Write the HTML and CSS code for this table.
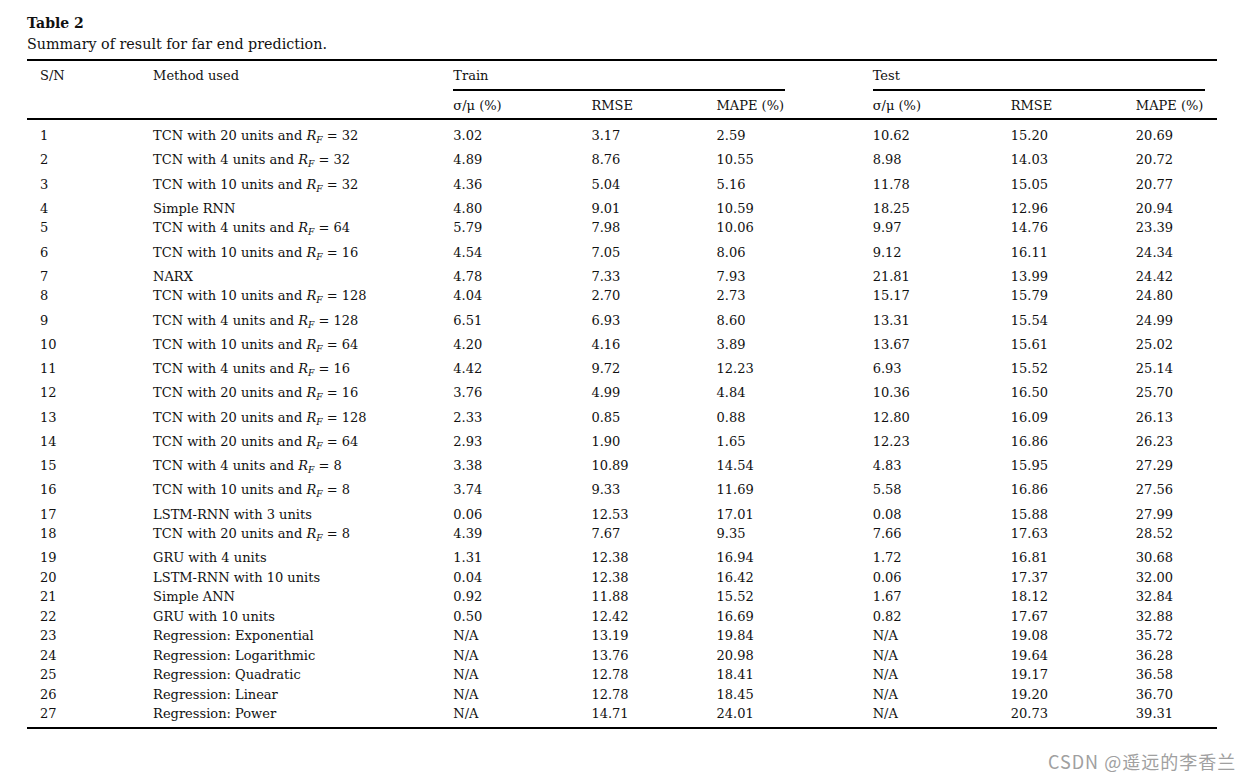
FILE: index.html
```html
<!DOCTYPE html>
<html>
<head>
<meta charset="utf-8">
<link rel="stylesheet" href="styles.css">
</head>
<body>
<div class="page">
  <div class="title">Table 2</div>
  <div class="caption">Summary of result for far end prediction.</div>
  <table class="results">
    <colgroup>
      <col class="c-sn"><col class="c-method"><col class="c-a"><col class="c-b"><col class="c-c"><col class="c-a"><col class="c-b"><col class="c-d">
    </colgroup>
    <thead>
      <tr class="h1">
        <th rowspan="2" class="first top">S/N</th>
        <th rowspan="2" class="top">Method used</th>
        <th colspan="3" class="group"><div class="group-label">Train</div></th>
        <th colspan="3" class="group"><div class="group-label">Test</div></th>
      </tr>
      <tr class="h2">
        <th>σ/μ (%)</th><th>RMSE</th><th>MAPE (%)</th>
        <th>σ/μ (%)</th><th>RMSE</th><th>MAPE (%)</th>
      </tr>
    </thead>
    <tbody>
      <tr class="tall first-row"><td class="first">1</td><td>TCN with 20 units and <i>R</i><sub><i>F</i></sub> = 32</td><td>3.02</td><td>3.17</td><td>2.59</td><td>10.62</td><td>15.20</td><td>20.69</td></tr>
      <tr class="tall"><td class="first">2</td><td>TCN with 4 units and <i>R</i><sub><i>F</i></sub> = 32</td><td>4.89</td><td>8.76</td><td>10.55</td><td>8.98</td><td>14.03</td><td>20.72</td></tr>
      <tr class="tall"><td class="first">3</td><td>TCN with 10 units and <i>R</i><sub><i>F</i></sub> = 32</td><td>4.36</td><td>5.04</td><td>5.16</td><td>11.78</td><td>15.05</td><td>20.77</td></tr>
      <tr><td class="first">4</td><td>Simple RNN</td><td>4.80</td><td>9.01</td><td>10.59</td><td>18.25</td><td>12.96</td><td>20.94</td></tr>
      <tr class="tall"><td class="first">5</td><td>TCN with 4 units and <i>R</i><sub><i>F</i></sub> = 64</td><td>5.79</td><td>7.98</td><td>10.06</td><td>9.97</td><td>14.76</td><td>23.39</td></tr>
      <tr class="tall"><td class="first">6</td><td>TCN with 10 units and <i>R</i><sub><i>F</i></sub> = 16</td><td>4.54</td><td>7.05</td><td>8.06</td><td>9.12</td><td>16.11</td><td>24.34</td></tr>
      <tr><td class="first">7</td><td>NARX</td><td>4.78</td><td>7.33</td><td>7.93</td><td>21.81</td><td>13.99</td><td>24.42</td></tr>
      <tr class="tall"><td class="first">8</td><td>TCN with 10 units and <i>R</i><sub><i>F</i></sub> = 128</td><td>4.04</td><td>2.70</td><td>2.73</td><td>15.17</td><td>15.79</td><td>24.80</td></tr>
      <tr class="tall"><td class="first">9</td><td>TCN with 4 units and <i>R</i><sub><i>F</i></sub> = 128</td><td>6.51</td><td>6.93</td><td>8.60</td><td>13.31</td><td>15.54</td><td>24.99</td></tr>
      <tr class="tall"><td class="first">10</td><td>TCN with 10 units and <i>R</i><sub><i>F</i></sub> = 64</td><td>4.20</td><td>4.16</td><td>3.89</td><td>13.67</td><td>15.61</td><td>25.02</td></tr>
      <tr class="tall"><td class="first">11</td><td>TCN with 4 units and <i>R</i><sub><i>F</i></sub> = 16</td><td>4.42</td><td>9.72</td><td>12.23</td><td>6.93</td><td>15.52</td><td>25.14</td></tr>
      <tr class="tall"><td class="first">12</td><td>TCN with 20 units and <i>R</i><sub><i>F</i></sub> = 16</td><td>3.76</td><td>4.99</td><td>4.84</td><td>10.36</td><td>16.50</td><td>25.70</td></tr>
      <tr class="tall"><td class="first">13</td><td>TCN with 20 units and <i>R</i><sub><i>F</i></sub> = 128</td><td>2.33</td><td>0.85</td><td>0.88</td><td>12.80</td><td>16.09</td><td>26.13</td></tr>
      <tr class="tall"><td class="first">14</td><td>TCN with 20 units and <i>R</i><sub><i>F</i></sub> = 64</td><td>2.93</td><td>1.90</td><td>1.65</td><td>12.23</td><td>16.86</td><td>26.23</td></tr>
      <tr class="tall"><td class="first">15</td><td>TCN with 4 units and <i>R</i><sub><i>F</i></sub> = 8</td><td>3.38</td><td>10.89</td><td>14.54</td><td>4.83</td><td>15.95</td><td>27.29</td></tr>
      <tr class="tall"><td class="first">16</td><td>TCN with 10 units and <i>R</i><sub><i>F</i></sub> = 8</td><td>3.74</td><td>9.33</td><td>11.69</td><td>5.58</td><td>16.86</td><td>27.56</td></tr>
      <tr><td class="first">17</td><td>LSTM-RNN with 3 units</td><td>0.06</td><td>12.53</td><td>17.01</td><td>0.08</td><td>15.88</td><td>27.99</td></tr>
      <tr class="tall"><td class="first">18</td><td>TCN with 20 units and <i>R</i><sub><i>F</i></sub> = 8</td><td>4.39</td><td>7.67</td><td>9.35</td><td>7.66</td><td>17.63</td><td>28.52</td></tr>
      <tr><td class="first">19</td><td>GRU with 4 units</td><td>1.31</td><td>12.38</td><td>16.94</td><td>1.72</td><td>16.81</td><td>30.68</td></tr>
      <tr><td class="first">20</td><td>LSTM-RNN with 10 units</td><td>0.04</td><td>12.38</td><td>16.42</td><td>0.06</td><td>17.37</td><td>32.00</td></tr>
      <tr><td class="first">21</td><td>Simple ANN</td><td>0.92</td><td>11.88</td><td>15.52</td><td>1.67</td><td>18.12</td><td>32.84</td></tr>
      <tr><td class="first">22</td><td>GRU with 10 units</td><td>0.50</td><td>12.42</td><td>16.69</td><td>0.82</td><td>17.67</td><td>32.88</td></tr>
      <tr><td class="first">23</td><td>Regression: Exponential</td><td>N/A</td><td>13.19</td><td>19.84</td><td>N/A</td><td>19.08</td><td>35.72</td></tr>
      <tr><td class="first">24</td><td>Regression: Logarithmic</td><td>N/A</td><td>13.76</td><td>20.98</td><td>N/A</td><td>19.64</td><td>36.28</td></tr>
      <tr><td class="first">25</td><td>Regression: Quadratic</td><td>N/A</td><td>12.78</td><td>18.41</td><td>N/A</td><td>19.17</td><td>36.58</td></tr>
      <tr><td class="first">26</td><td>Regression: Linear</td><td>N/A</td><td>12.78</td><td>18.45</td><td>N/A</td><td>19.20</td><td>36.70</td></tr>
      <tr class="last-row"><td class="first">27</td><td>Regression: Power</td><td>N/A</td><td>14.71</td><td>24.01</td><td>N/A</td><td>20.73</td><td>39.31</td></tr>
    </tbody>
  </table>
  <div class="watermark">CSDN @遥远的李香兰</div>
</div>
</body>
</html>
```
FILE: styles.css
```css
html, body {
  margin: 0;
  padding: 0;
  background: #ffffff;
}
.page {
  position: relative;
  width: 1254px;
  height: 780px;
  padding: 12px 0 0 27px;
  box-sizing: border-box;
  font-family: "DejaVu Serif", "Liberation Serif", serif;
  font-size: 13px;
  color: #111111;
}
.title {
  font-weight: bold;
  font-size: 14px;
  line-height: 20px;
  height: 20px;
  padding-top: 1px;
}
.caption {
  font-size: 14.3px;
  line-height: 20px;
  height: 20px;
  margin-top: 1px;
}
.results {
  margin-top: 5px;
  width: 1190px;
  table-layout: fixed;
  border-collapse: collapse;
  border-top: 2px solid #000;
  border-bottom: 2px solid #000;
}
.c-sn { width: 126px; }
.c-method { width: 300px; }
.c-a { width: 138px; }
.c-b { width: 125px; }
.c-c { width: 156px; }
.c-d { width: 81px; }
.results th, .results td {
  padding: 0;
  text-align: left;
  font-weight: normal;
  line-height: 19.5px;
  white-space: nowrap;
  vertical-align: top;
}
.results .first { padding-left: 13px; }
.results th.top { padding-top: 5.25px; }
.results th.group { padding-top: 5.25px; }
.group-label {
  width: 332px;
  padding-bottom: 3.25px;
  border-bottom: 2px solid #000;
}
.h2 th {
  padding-top: 5.25px;
  padding-bottom: 2.25px;
}
thead {
  border-bottom: 2px solid #000;
}
.results tr.tall td { padding-bottom: 4.75px; }
.results tr.first-row td { padding-top: 6px; }
.results tr.last-row td { padding-bottom: 3.5px; }
.results sub {
  font-size: 70%;
  line-height: 0;
  vertical-align: -3px;
}
.watermark {
  position: absolute;
  left: 1048px;
  top: 750px;
  font-family: "Noto Sans CJK SC", "Liberation Sans", sans-serif;
  font-size: 18px;
  letter-spacing: 1px;
  line-height: 22px;
  color: #a0a0a0;
  white-space: nowrap;
}
```
